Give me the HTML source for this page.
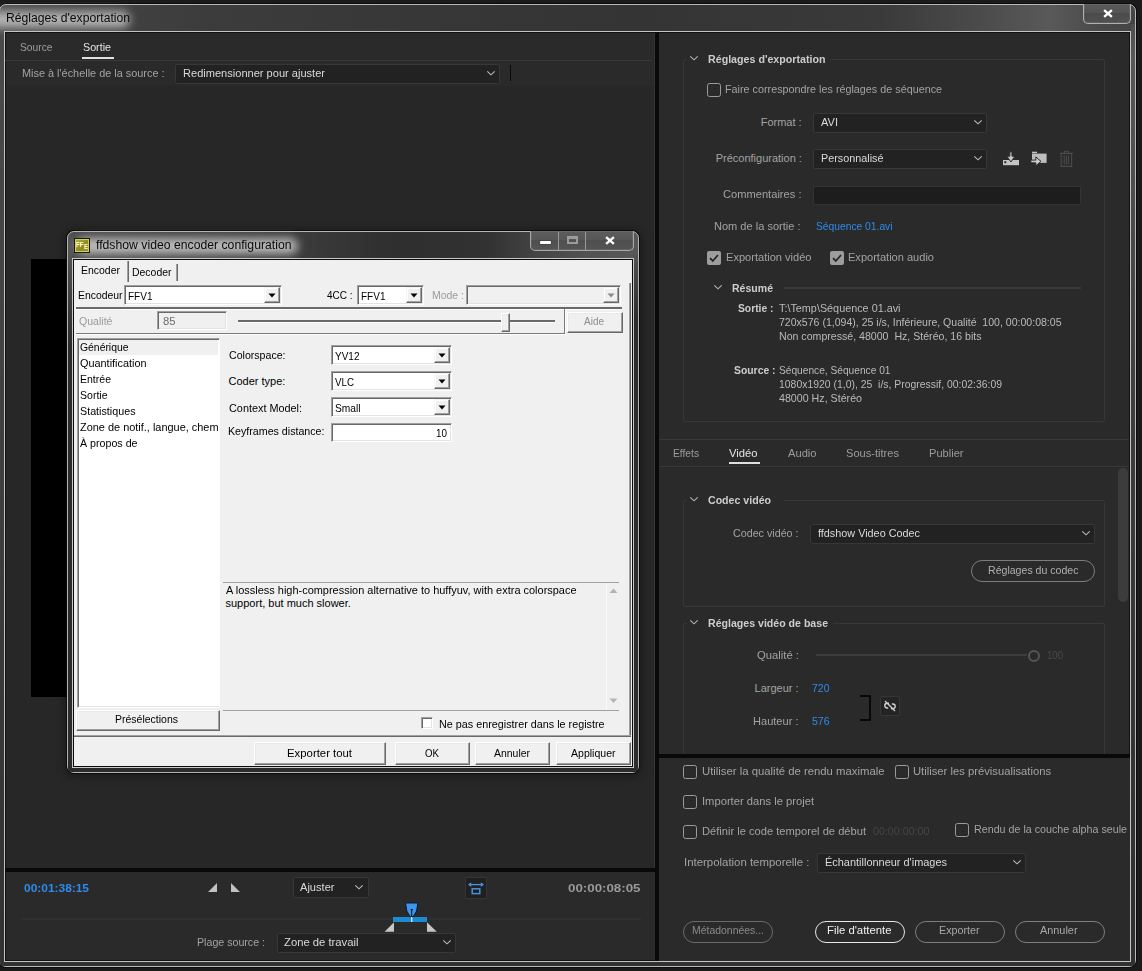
<!DOCTYPE html>
<html lang="fr"><head><meta charset="utf-8"><title>Réglages d'exportation</title>
<style>
html,body{margin:0;padding:0;background:#1b1b1b;}
body{width:1142px;height:971px;overflow:hidden;font-family:"Liberation Sans",sans-serif;}
#root{position:relative;width:1142px;height:971px;overflow:hidden;}
#root div,#root span.t,#root svg{position:absolute;box-sizing:border-box;}
span.t{line-height:0;white-space:pre;transform-origin:0 0;}
.dd{background:#222222;border:1px solid #373737;border-radius:2px;}
.cb{border:1.7px solid #9b9b9b;border-radius:2.5px;}
.pill{border:1px solid #7d7d7d;border-radius:11px;}
.sunk{border:1px solid;border-color:#a0a0a0 #fff #fff #a0a0a0;box-shadow:inset 1px 1px 0 #696969,inset -1px -1px 0 #e3e3e3;background:#fff;}
.rais{border:1px solid;border-color:#fff #696969 #696969 #fff;box-shadow:inset -1px -1px 0 #a0a0a0,inset 1px 1px 0 #e9e9e9;background:#f0f0f0;}
.cbtn{border:1px solid;border-color:#f4f4f4 #696969 #696969 #f4f4f4;box-shadow:inset -1px -1px 0 #a0a0a0,inset 1px 1px 0 #fff;background:#f0f0f0;}

</style></head>
<body>
<div id="root">
<div style="left:-1px;top:4px;width:1137px;height:963px;border:1px solid #b9b9b9;border-radius:7px;box-shadow:0 0 0 1px #0c0c0c;background:linear-gradient(90deg,#4a4a4a 0,#3c3c3c 200px,#363636 480px,#343434 640px,#3a3a3a 880px,#4b4b4b 980px,#595959 1050px,#4a4a4a 1100px,#444 1137px);"></div>
<div style="left:0px;top:28px;width:4px;height:934px;background:linear-gradient(#4a4a4a 0,#454545 200px,#3a3a3a 600px,#333 900px);"></div>
<div style="left:1131px;top:24px;width:4px;height:938px;background:linear-gradient(#4e4e4e 0,#585858 30px,#4a4a4a 200px,#3c3c3c 420px,#303030 900px);"></div>
<div style="left:0px;top:962px;width:1135px;height:4px;background:#313131;border-radius:0 0 6px 6px;"></div>
<div style="left:-12px;top:11px;width:142px;height:17px;background:rgba(205,205,205,.80);border-radius:9px;filter:blur(5px);"></div>
<span class="t" style="left:6.00px;top:17.50px;font-size:12px;color:#0a0a0a;transform:scaleX(1.0134);">Réglages d'exportation</span>
<div style="left:1083px;top:4px;width:48px;height:20px;border:1px solid #b0b0b0;border-top:none;border-radius:0 0 5px 5px;background:linear-gradient(#5a5a5a,#545454 45%,#4b4b4b 50%,#515151);box-shadow:inset 0 0 0 1px rgba(255,255,255,.08);"></div>
<svg style="left:1102.5px;top:8.5px" width="10" height="9" viewBox="0 0 11 10"><path d="M1.2 1.2 L9.8 8.8 M9.8 1.2 L1.2 8.8" stroke="#fff" stroke-width="2.6" fill="none"/></svg>
<div style="left:4px;top:31px;width:1127px;height:931px;border:1px solid #c4c4c4;background:#111;"></div>
<div style="left:6px;top:33px;width:1123px;height:927px;background:#2a2a2a;"></div>
<span class="t" style="left:19.50px;top:47.00px;font-size:11px;color:#9c9c9c;transform:scaleX(0.9325);">Source</span>
<span class="t" style="left:83.00px;top:47.00px;font-size:11px;color:#e4e4e4;transform:scaleX(0.9745);">Sortie</span>
<div style="left:82px;top:57px;width:32px;height:2px;background:#e0e0e0;"></div>
<div style="left:5px;top:60px;width:647px;height:1px;background:#373737;"></div>
<div style="left:654px;top:33px;width:1px;height:835px;background:#353535;"></div>
<span class="t" style="left:21.80px;top:73.00px;font-size:11px;color:#a3a3a3;transform:scaleX(0.9900);">Mise à l'échelle de la source :</span>
<div class="dd" style="left:175px;top:64px;width:325px;height:20px;"></div>
<span class="t" style="left:183.00px;top:73.00px;font-size:11px;color:#dadada;transform:scaleX(1.0054);">Redimensionner pour ajuster</span>
<svg style="left:486px;top:70px" width="10" height="7" viewBox="0 0 10 7"><path d="M1.3 1.3 L5 4.8 L8.7 1.3" stroke="#b9b9b9" stroke-width="1.15" fill="none"/></svg>
<div style="left:510px;top:65px;width:1px;height:16px;background:#0a0a0a;"></div>
<div style="left:6px;top:86px;width:648px;height:782px;background:#272727;"></div>
<div style="left:31px;top:259px;width:600px;height:438px;background:#000;"></div>
<div style="left:655px;top:32px;width:4px;height:929px;background:#090909;"></div>
<div style="left:5px;top:868px;width:650px;height:4px;background:#090909;"></div>
<span class="t" style="left:23.50px;top:888.00px;font-size:11px;color:#2d8ceb;font-weight:bold;transform:scaleX(1.0847);">00:01:38:15</span>
<svg style="left:207px;top:882px" width="34" height="11" viewBox="0 0 34 11"><path d="M1 10 L10 10 L10 1 Z M24 1 L24 10 L33 10 Z" fill="#c2c2c2"/></svg>
<div class="dd" style="left:293px;top:877px;width:76px;height:21px;"></div>
<span class="t" style="left:300.00px;top:887.00px;font-size:11px;color:#dadada;transform:scaleX(1.0078);">Ajuster</span>
<svg style="left:354px;top:884px" width="10" height="7" viewBox="0 0 10 7"><path d="M1.3 1.3 L5 4.8 L8.7 1.3" stroke="#b9b9b9" stroke-width="1.15" fill="none"/></svg>
<div style="left:465px;top:877px;width:22px;height:22px;background:#202020;border:1px solid #343434;border-radius:2px;"></div>
<svg style="left:467px;top:880px" width="18" height="16" viewBox="0 0 18 16"><path d="M2 4.6 H16" stroke="#4a8fe0" stroke-width="1.3" fill="none"/><path d="M1 4.6 L4.2 2.2 V7 Z M17 4.6 L13.8 2.2 V7 Z" fill="#4a8fe0"/><rect x="5.2" y="8.8" width="7.6" height="4.8" stroke="#4a8fe0" stroke-width="1.5" fill="none"/></svg>
<span class="t" style="left:568.00px;top:888.00px;font-size:11px;color:#9a9a9a;font-weight:bold;transform:scaleX(1.2099);">00:00:08:05</span>
<div style="left:21px;top:918px;width:620px;height:2px;background:#303030;"></div>
<div style="left:393px;top:917px;width:34px;height:5px;background:#1c8bd0;"></div>
<svg style="left:404px;top:902px" width="16" height="21" viewBox="0 0 16 21"><path d="M2.2 1 H13.2 Q13.8 1 13.7 2 L12.6 9 L9.2 14.8 H6.2 L2.8 9 L1.7 2 Q1.6 1 2.2 1 Z" fill="#3c96f0" stroke="#0b1a30" stroke-width="1"/><path d="M6.6 7.6 H8.8 M7.7 7.6 V15" stroke="#0a0a0a" stroke-width="1"/><path d="M7.7 15 V20" stroke="#f4f4f4" stroke-width="1.2"/></svg>
<svg style="left:384px;top:922px" width="54" height="10" viewBox="0 0 54 10"><path d="M0.5 9.8 H10 V0.3 Z M43 0.3 V9.8 H52.8 Z" fill="#c6c6c6"/></svg>
<span class="t" style="left:196.50px;top:942.00px;font-size:11px;color:#a3a3a3;transform:scaleX(0.9671);">Plage source :</span>
<div class="dd" style="left:277px;top:933px;width:179px;height:20px;"></div>
<span class="t" style="left:284.00px;top:942.00px;font-size:11px;color:#dadada;transform:scaleX(1.0240);">Zone de travail</span>
<svg style="left:442px;top:939px" width="10" height="7" viewBox="0 0 10 7"><path d="M1.3 1.3 L5 4.8 L8.7 1.3" stroke="#b9b9b9" stroke-width="1.15" fill="none"/></svg>
<div style="left:683px;top:59px;width:422px;height:363px;border:1px solid #373737;border-radius:2px;"></div>
<div style="left:687px;top:53px;width:144px;height:13px;background:#2a2a2a;"></div>
<svg style="left:689px;top:55px" width="10" height="7" viewBox="0 0 10 7"><path d="M1.3 1.3 L5 4.8 L8.7 1.3" stroke="#b4b4b4" stroke-width="1.15" fill="none"/></svg>
<span class="t" style="left:708.00px;top:58.80px;font-size:11px;color:#cdcdcd;font-weight:bold;transform:scaleX(0.9696);">Réglages d'exportation</span>
<div class="cb" style="left:707.2px;top:83.3px;width:13.6px;height:13.6px;"></div>
<span class="t" style="left:725.00px;top:89.00px;font-size:11px;color:#a3a3a3;transform:scaleX(0.9804);">Faire correspondre les réglages de séquence</span>
<span class="t" style="left:760.70px;top:121.70px;font-size:11px;color:#a3a3a3;">Format :</span>
<div class="dd" style="left:813px;top:113px;width:174px;height:20px;"></div>
<span class="t" style="left:821.00px;top:121.70px;font-size:11px;color:#dadada;transform:scaleX(1.0051);">AVI</span>
<svg style="left:973px;top:119px" width="10" height="7" viewBox="0 0 10 7"><path d="M1.3 1.3 L5 4.8 L8.7 1.3" stroke="#b9b9b9" stroke-width="1.15" fill="none"/></svg>
<span class="t" style="left:715.70px;top:158.00px;font-size:11px;color:#a3a3a3;">Préconfiguration :</span>
<div class="dd" style="left:813px;top:149px;width:174px;height:20px;"></div>
<span class="t" style="left:821.00px;top:158.00px;font-size:11px;color:#dadada;transform:scaleX(0.9829);">Personnalisé</span>
<svg style="left:973px;top:155px" width="10" height="7" viewBox="0 0 10 7"><path d="M1.3 1.3 L5 4.8 L8.7 1.3" stroke="#b9b9b9" stroke-width="1.15" fill="none"/></svg>
<svg style="left:1002px;top:151px" width="18" height="15" viewBox="0 0 18 15"><rect x="1" y="9" width="16" height="5.2" fill="#c4c4c4"/><rect x="2.3" y="10.2" width="2" height="2" fill="#2a2a2a"/><path d="M7.8 0.8 H10 V5.2 H13 L8.9 11 L4.8 5.2 H7.8 Z" fill="#c4c4c4" stroke="#2a2a2a" stroke-width="1"/></svg>
<svg style="left:1030px;top:151px" width="18" height="15" viewBox="0 0 18 15"><rect x="2" y="0.7" width="5" height="1.5" fill="#c4c4c4"/><rect x="2" y="2.6" width="14.6" height="9.3" fill="#bdbdbd"/><path d="M0.8 9.1 H5.8 V5.9 L11 10.4 L5.8 14.8 V11.8 H0.8 Z" fill="#cacaca" stroke="#2a2a2a" stroke-width="1"/></svg>
<svg style="left:1059px;top:150px" width="15" height="18" viewBox="0 0 15 18"><path d="M5.4 3.2 V1.6 Q5.4 1.2 5.9 1.2 H8.9 Q9.4 1.2 9.4 1.6 V3.2 M1 3.4 H13.8 M2.2 3.6 V16.4 H12.6 V3.6 M5.2 5.6 V14.6 M7.4 5.6 V14.6 M9.6 5.6 V14.6" stroke="#4b4b4b" stroke-width="1.1" fill="none"/></svg>
<span class="t" style="left:723.20px;top:194.00px;font-size:11px;color:#a3a3a3;transform:scaleX(1.0112);">Commentaires :</span>
<div style="left:813px;top:186px;width:268px;height:19px;background:#1d1d1d;border:1px solid #343434;border-radius:2px;"></div>
<span class="t" style="left:713.50px;top:226.00px;font-size:11px;color:#a3a3a3;transform:scaleX(1.0035);">Nom de la sortie :</span>
<span class="t" style="left:816.00px;top:226.00px;font-size:11px;color:#2d8ceb;transform:scaleX(0.9335);">Séquence 01.avi</span>
<div style="left:707px;top:251px;width:14px;height:14px;background:#9d9d9d;border-radius:2px;"></div>
<svg style="left:707px;top:251px" width="14" height="14" viewBox="0 0 14 14"><path d="M3 7.2 L5.8 10 L11 4" stroke="#262626" stroke-width="1.8" fill="none"/></svg>
<span class="t" style="left:725.50px;top:256.60px;font-size:11px;color:#a3a3a3;transform:scaleX(1.0060);">Exportation vidéo</span>
<div style="left:830px;top:251px;width:14px;height:14px;background:#9d9d9d;border-radius:2px;"></div>
<svg style="left:830px;top:251px" width="14" height="14" viewBox="0 0 14 14"><path d="M3 7.2 L5.8 10 L11 4" stroke="#262626" stroke-width="1.8" fill="none"/></svg>
<span class="t" style="left:848.00px;top:256.60px;font-size:11px;color:#a3a3a3;transform:scaleX(1.0046);">Exportation audio</span>
<svg style="left:713px;top:284px" width="10" height="7" viewBox="0 0 10 7"><path d="M1.3 1.3 L5 4.8 L8.7 1.3" stroke="#b4b4b4" stroke-width="1.15" fill="none"/></svg>
<span class="t" style="left:732.00px;top:288.00px;font-size:11px;color:#cdcdcd;font-weight:bold;transform:scaleX(0.9581);">Résumé</span>
<div style="left:784px;top:287px;width:297px;height:2px;background:#383838;"></div>
<span class="t" style="left:738.00px;top:308.00px;font-size:11px;color:#cdcdcd;font-weight:bold;transform:scaleX(0.9369);">Sortie :</span>
<span class="t" style="left:779.00px;top:308.00px;font-size:11px;color:#bababa;transform:scaleX(0.9837);">T:\Temp\Séquence 01.avi</span>
<span class="t" style="left:779.00px;top:321.50px;font-size:11px;color:#bababa;transform:scaleX(0.9585);">720x576 (1,094), 25 i/s, Inférieure, Qualité  100, 00:00:08:05</span>
<span class="t" style="left:779.00px;top:335.50px;font-size:11px;color:#bababa;transform:scaleX(0.9628);">Non compressé, 48000  Hz, Stéréo, 16 bits</span>
<span class="t" style="left:734.00px;top:370.00px;font-size:11px;color:#cdcdcd;font-weight:bold;transform:scaleX(0.9430);">Source :</span>
<span class="t" style="left:779.00px;top:370.00px;font-size:11px;color:#bababa;transform:scaleX(0.9255);">Séquence, Séquence 01</span>
<span class="t" style="left:779.00px;top:383.50px;font-size:11px;color:#bababa;transform:scaleX(0.9473);">1080x1920 (1,0), 25  i/s, Progressif, 00:02:36:09</span>
<span class="t" style="left:779.00px;top:397.50px;font-size:11px;color:#bababa;transform:scaleX(0.9696);">48000 Hz, Stéréo</span>
<div style="left:659px;top:439px;width:470px;height:1px;background:#373737;"></div>
<div style="left:659px;top:466px;width:470px;height:1px;background:#373737;"></div>
<span class="t" style="left:673.00px;top:453.00px;font-size:11px;color:#9c9c9c;transform:scaleX(0.9311);">Effets</span>
<span class="t" style="left:729.00px;top:453.00px;font-size:11px;color:#e4e4e4;transform:scaleX(1.0203);">Vidéo</span>
<div style="left:729px;top:462px;width:31px;height:2px;background:#e0e0e0;"></div>
<span class="t" style="left:788.00px;top:453.00px;font-size:11px;color:#9c9c9c;transform:scaleX(1.0131);">Audio</span>
<span class="t" style="left:845.50px;top:453.00px;font-size:11px;color:#9c9c9c;transform:scaleX(1.0082);">Sous-titres</span>
<span class="t" style="left:928.50px;top:453.00px;font-size:11px;color:#9c9c9c;transform:scaleX(1.0076);">Publier</span>
<div style="left:1118px;top:468px;width:10px;height:134px;background:#3c3c3c;border-radius:5px;"></div>
<div style="left:683px;top:500px;width:422px;height:107px;border:1px solid #373737;border-radius:2px;"></div>
<div style="left:687px;top:494px;width:97px;height:13px;background:#2a2a2a;"></div>
<svg style="left:689px;top:496px" width="10" height="7" viewBox="0 0 10 7"><path d="M1.3 1.3 L5 4.8 L8.7 1.3" stroke="#b4b4b4" stroke-width="1.15" fill="none"/></svg>
<span class="t" style="left:708.00px;top:499.80px;font-size:11px;color:#cdcdcd;font-weight:bold;transform:scaleX(0.9633);">Codec vidéo</span>
<span class="t" style="left:733.10px;top:533.00px;font-size:11px;color:#a3a3a3;transform:scaleX(0.9739);">Codec vidéo :</span>
<div class="dd" style="left:810px;top:524px;width:285px;height:20px;"></div>
<span class="t" style="left:818.00px;top:533.00px;font-size:11px;color:#dadada;transform:scaleX(0.9851);">ffdshow Video Codec</span>
<svg style="left:1081px;top:530px" width="10" height="7" viewBox="0 0 10 7"><path d="M1.3 1.3 L5 4.8 L8.7 1.3" stroke="#b9b9b9" stroke-width="1.15" fill="none"/></svg>
<div class="pill" style="left:971px;top:560px;width:124px;height:22px;"></div>
<span class="t" style="left:987.50px;top:570.00px;font-size:11px;color:#b0b0b0;transform:scaleX(0.9610);">Réglages du codec</span>
<div style="left:683px;top:623px;width:422px;height:131px;border:1px solid #373737;border-bottom:none;border-radius:2px 2px 0 0;"></div>
<div style="left:687px;top:617px;width:146px;height:13px;background:#2a2a2a;"></div>
<svg style="left:689px;top:619px" width="10" height="7" viewBox="0 0 10 7"><path d="M1.3 1.3 L5 4.8 L8.7 1.3" stroke="#b4b4b4" stroke-width="1.15" fill="none"/></svg>
<span class="t" style="left:708.00px;top:623.30px;font-size:11px;color:#cdcdcd;font-weight:bold;transform:scaleX(0.9623);">Réglages vidéo de base</span>
<span class="t" style="left:756.60px;top:655.00px;font-size:11px;color:#a3a3a3;transform:scaleX(1.0253);">Qualité :</span>
<div style="left:816px;top:654px;width:211px;height:2px;background:#3d3d3d;"></div>
<div style="left:1028px;top:650px;width:12px;height:12px;border:2px solid #555;border-radius:6px;"></div>
<span class="t" style="left:1046.50px;top:655.00px;font-size:11px;color:#4a4a4a;transform:scaleX(0.8719);">100</span>
<span class="t" style="left:754.60px;top:687.80px;font-size:11px;color:#a3a3a3;">Largeur :</span>
<span class="t" style="left:812.00px;top:687.80px;font-size:11px;color:#2d8ceb;transform:scaleX(0.9536);">720</span>
<span class="t" style="left:753.10px;top:721.00px;font-size:11px;color:#a3a3a3;transform:scaleX(1.0057);">Hauteur :</span>
<span class="t" style="left:812.00px;top:721.00px;font-size:11px;color:#2d8ceb;transform:scaleX(0.9536);">576</span>
<div style="left:860px;top:695px;width:11px;height:26px;border:2px solid #080808;border-left:none;"></div>
<div style="left:880px;top:696px;width:20px;height:20px;background:#242424;border:1px solid #363636;border-radius:2px;"></div>
<svg style="left:883px;top:699px" width="14" height="14" viewBox="0 0 14 14"><path d="M6 4.2 L4.2 4.2 A2.4 2.4 0 0 0 4.2 9 L5.2 9 M8 9.8 L9.8 9.8 A2.4 2.4 0 0 0 9.8 5 L8.8 5 M2 2 L12 12" stroke="#d0d0d0" stroke-width="1.4" fill="none" transform="rotate(0 7 7)"/></svg>
<div style="left:659px;top:754px;width:471px;height:4px;background:#090909;"></div>
<div style="left:659px;top:758px;width:471px;height:203px;background:#2a2a2a;"></div>
<div class="cb" style="left:683.2px;top:765.3px;width:13.6px;height:13.6px;"></div>
<span class="t" style="left:701.50px;top:770.50px;font-size:11px;color:#a3a3a3;transform:scaleX(1.0294);">Utiliser la qualité de rendu maximale</span>
<div class="cb" style="left:895.2px;top:765.3px;width:13.6px;height:13.6px;"></div>
<span class="t" style="left:912.50px;top:770.50px;font-size:11px;color:#a3a3a3;transform:scaleX(1.0215);">Utiliser les prévisualisations</span>
<div class="cb" style="left:683.2px;top:795.3px;width:13.6px;height:13.6px;"></div>
<span class="t" style="left:701.50px;top:800.50px;font-size:11px;color:#a3a3a3;transform:scaleX(1.0178);">Importer dans le projet</span>
<div class="cb" style="left:683.2px;top:825.3px;width:13.6px;height:13.6px;"></div>
<span class="t" style="left:701.50px;top:830.50px;font-size:11px;color:#a3a3a3;transform:scaleX(1.0122);">Définir le code temporel de début</span>
<span class="t" style="left:872.50px;top:830.50px;font-size:11px;color:#454545;transform:scaleX(0.9724);">00:00:00:00</span>
<div class="cb" style="left:955.2px;top:823.3px;width:13.6px;height:13.6px;"></div>
<span class="t" style="left:973.50px;top:828.50px;font-size:11px;color:#a3a3a3;transform:scaleX(0.9735);">Rendu de la couche alpha seule</span>
<span class="t" style="left:684.00px;top:862.00px;font-size:11px;color:#a3a3a3;transform:scaleX(1.0367);">Interpolation temporelle :</span>
<div class="dd" style="left:817px;top:853px;width:209px;height:20px;"></div>
<span class="t" style="left:824.50px;top:862.00px;font-size:11px;color:#dadada;transform:scaleX(0.9955);">Échantillonneur d'images</span>
<svg style="left:1012px;top:859px" width="10" height="7" viewBox="0 0 10 7"><path d="M1.3 1.3 L5 4.8 L8.7 1.3" stroke="#b9b9b9" stroke-width="1.15" fill="none"/></svg>
<div style="left:683px;top:921px;width:90px;height:22px;border:1px solid #6a6a6a;border-radius:11px;"></div>
<span class="t" style="left:691.50px;top:930.20px;font-size:11px;color:#8a8a8a;transform:scaleX(0.9496);">Métadonnées...</span>
<div style="left:815px;top:921px;width:90px;height:22px;border:1px solid #e6e6e6;border-radius:11px;"></div>
<span class="t" style="left:827.00px;top:930.20px;font-size:11px;color:#f0f0f0;transform:scaleX(1.0298);">File d'attente</span>
<div class="pill" style="left:915px;top:921px;width:90px;height:22px;"></div>
<span class="t" style="left:939.00px;top:930.20px;font-size:11px;color:#a8a8a8;transform:scaleX(0.9743);">Exporter</span>
<div class="pill" style="left:1015px;top:921px;width:90px;height:22px;"></div>
<span class="t" style="left:1040.00px;top:930.20px;font-size:11px;color:#a8a8a8;transform:scaleX(0.9891);">Annuler</span>
<div style="left:67px;top:231px;width:572px;height:542px;border:1px solid #b4b4b4;border-radius:7px;box-shadow:0 0 0 1px #0b0b0b,0 1px 9px 2px rgba(0,0,0,.38);background:linear-gradient(90deg,#565656 0,#4a4a4a 6px,#3a3a3a 240px,#2e2e2e 330px,#323232 420px,#444 470px,#525252 520px,#585858 572px);"></div>
<div style="left:68px;top:256px;width:4px;height:512px;background:linear-gradient(#545454 0,#4a4a4a 20px,#2c2c2c 90px);"></div>
<div style="left:634px;top:252px;width:4px;height:516px;background:linear-gradient(#585858 0,#4c4c4c 12px,#2c2c2c 70px);"></div>
<div style="left:68px;top:768px;width:570px;height:4px;background:#2b2b2b;border-radius:0 0 6px 6px;"></div>
<div style="left:76px;top:238px;width:222px;height:16px;background:rgba(215,215,215,.82);border-radius:8px;filter:blur(5px);"></div>
<div style="left:74px;top:238px;width:16px;height:15px;background:linear-gradient(135deg,#b6b23a,#8e8a1c 60%,#a29e2c);border:1px solid #1a1a00;box-shadow:inset 0 0 0 1px #d2ce62;"></div>
<span class="t" style="left:76.30px;top:244.60px;font-size:7px;color:#fffbe0;font-weight:bold;transform:scaleX(0.8888);">FF</span>
<span class="t" style="left:84.00px;top:247.00px;font-size:7px;color:#fffbe0;font-weight:bold;transform:scaleX(0.8567);">E</span>
<span class="t" style="left:95.50px;top:244.50px;font-size:12px;color:#0a0a0a;transform:scaleX(1.0188);">ffdshow video encoder configuration</span>
<div style="left:530px;top:231px;width:104px;height:20px;border:1px solid #a6a6a6;border-top:none;border-radius:0 0 5px 5px;background:linear-gradient(#5d5d5d,#575757 45%,#4f4f4f 50%,#545454);box-shadow:inset 0 0 0 1px rgba(255,255,255,.08);"></div>
<div style="left:558px;top:232px;width:1px;height:18px;background:#9a9a9a;"></div>
<div style="left:585px;top:232px;width:1px;height:18px;background:#9a9a9a;"></div>
<div style="left:540px;top:241px;width:11px;height:3px;background:#fff;border-radius:1px;box-shadow:0 0 0 1px rgba(60,60,60,.55);"></div>
<div style="left:567px;top:236px;width:11px;height:8px;border:2px solid #9b9b9b;border-top-width:3px;"></div>
<svg style="left:604.5px;top:235.5px" width="10" height="9" viewBox="0 0 11 10"><path d="M1.2 1.2 L9.8 8.8 M9.8 1.2 L1.2 8.8" stroke="#fff" stroke-width="2.6" fill="none"/></svg>
<div style="left:72px;top:258px;width:562px;height:510px;border:1px solid #c9c9c9;background:#0a0a0a;"></div>
<div style="left:74px;top:260px;width:558px;height:506px;background:#f0f0f0;"></div>
<div style="left:75px;top:261px;width:54px;height:21px;border-right:1px solid #696969;box-shadow:inset -1px 0 0 #a0a0a0;"></div>
<span class="t" style="left:81.00px;top:269.70px;font-size:11px;color:#000;transform:scaleX(0.9520);">Encoder</span>
<div style="left:129px;top:264px;width:49px;height:17px;border-right:1px solid #696969;box-shadow:inset -1px 0 0 #a0a0a0;"></div>
<span class="t" style="left:131.60px;top:272.00px;font-size:11px;color:#000;transform:scaleX(0.9501);">Decoder</span>
<div style="left:629px;top:283px;width:2px;height:454px;background:#696969;border-left:1px solid #a0a0a0;"></div>
<div style="left:74px;top:735px;width:557px;height:2px;background:#696969;border-top:1px solid #a0a0a0;"></div>
<span class="t" style="left:77.80px;top:295.00px;font-size:11px;color:#000;transform:scaleX(0.9451);">Encodeur</span>
<div class="sunk" style="left:124px;top:285px;width:158px;height:20px;"></div>
<div class="cbtn" style="left:264px;top:287px;width:16px;height:16px;"></div>
<svg style="left:268px;top:293px" width="8" height="5" viewBox="0 0 8 5"><path d="M0.5 0.5 H7.5 L4 4.5 Z" fill="#000"/></svg>
<span class="t" style="left:128.00px;top:295.70px;font-size:11px;color:#000;transform:scaleX(0.9111);">FFV1</span>
<span class="t" style="left:327.00px;top:295.00px;font-size:11px;color:#000;transform:scaleX(0.9069);">4CC :</span>
<div class="sunk" style="left:357px;top:285px;width:67px;height:20px;"></div>
<div class="cbtn" style="left:406px;top:287px;width:16px;height:16px;"></div>
<svg style="left:410px;top:293px" width="8" height="5" viewBox="0 0 8 5"><path d="M0.5 0.5 H7.5 L4 4.5 Z" fill="#000"/></svg>
<span class="t" style="left:361.00px;top:295.70px;font-size:11px;color:#000;transform:scaleX(0.9111);">FFV1</span>
<span class="t" style="left:431.50px;top:295.00px;font-size:11px;color:#9a9a9a;transform:scaleX(0.9517);">Mode :</span>
<div class="sunk" style="left:466px;top:285px;width:155px;height:20px;background:#f0f0f0;"></div>
<div class="cbtn" style="left:603px;top:287px;width:16px;height:16px;"></div>
<svg style="left:607px;top:293px" width="8" height="5" viewBox="0 0 8 5"><path d="M0.5 0.5 H7.5 L4 4.5 Z" fill="#8a8a8a"/></svg>
<div style="left:76px;top:307px;width:546px;height:3px;background:#fff;border-top:2px solid #6a6a6a;"></div>
<span class="t" style="left:78.50px;top:321.00px;font-size:11px;color:#9a9a9a;transform:scaleX(0.9612);">Qualité</span>
<div class="sunk" style="left:157px;top:311px;width:70px;height:19px;background:#f0f0f0;"></div>
<span class="t" style="left:162.50px;top:321.00px;font-size:11px;color:#6d6d6d;transform:scaleX(1.0217);">85</span>
<div style="left:238px;top:320px;width:317px;height:3px;background:#fff;border-top:2px solid #6a6a6a;"></div>
<div class="rais" style="left:501px;top:313px;width:9px;height:19px;"></div>
<div style="left:564px;top:309px;width:2px;height:25px;background:#fff;border-left:1px solid #7a7a7a;"></div>
<div style="left:76px;top:333px;width:489px;height:2px;background:#fff;border-top:1px solid #7a7a7a;"></div>
<div class="rais" style="left:567px;top:312px;width:56px;height:21px;"></div>
<span class="t" style="left:584.00px;top:320.70px;font-size:11px;color:#8e8e8e;transform:scaleX(0.9085);">Aide</span>
<div class="sunk" style="left:77px;top:338px;width:143px;height:370px;"></div>
<div style="left:79px;top:340px;width:139px;height:15px;background:#f0f0f0;"></div>
<span class="t" style="left:79.50px;top:347.00px;font-size:11px;color:#000;transform:scaleX(0.9442);">Générique</span>
<span class="t" style="left:79.50px;top:363.00px;font-size:11px;color:#000;transform:scaleX(0.9887);">Quantification</span>
<span class="t" style="left:79.50px;top:379.00px;font-size:11px;color:#000;transform:scaleX(0.9566);">Entrée</span>
<span class="t" style="left:79.50px;top:395.00px;font-size:11px;color:#000;transform:scaleX(0.9571);">Sortie</span>
<span class="t" style="left:79.50px;top:411.00px;font-size:11px;color:#000;transform:scaleX(0.9761);">Statistiques</span>
<span class="t" style="left:79.50px;top:427.00px;font-size:11px;color:#000;transform:scaleX(0.9935);">Zone de notif., langue, chem</span>
<span class="t" style="left:79.50px;top:443.00px;font-size:11px;color:#000;transform:scaleX(0.9694);">À propos de</span>
<div style="left:218px;top:340px;width:1px;height:366px;background:#fff;"></div>
<span class="t" style="left:228.50px;top:355.00px;font-size:11px;color:#000;transform:scaleX(0.9627);">Colorspace:</span>
<div class="sunk" style="left:331px;top:345px;width:121px;height:20px;"></div>
<div class="cbtn" style="left:434px;top:347px;width:16px;height:16px;"></div>
<svg style="left:438px;top:353px" width="8" height="5" viewBox="0 0 8 5"><path d="M0.5 0.5 H7.5 L4 4.5 Z" fill="#000"/></svg>
<span class="t" style="left:335.00px;top:355.70px;font-size:11px;color:#000;transform:scaleX(0.9105);">YV12</span>
<span class="t" style="left:228.50px;top:380.50px;font-size:11px;color:#000;">Coder type:</span>
<div class="sunk" style="left:331px;top:371px;width:121px;height:20px;"></div>
<div class="cbtn" style="left:434px;top:373px;width:16px;height:16px;"></div>
<svg style="left:438px;top:379px" width="8" height="5" viewBox="0 0 8 5"><path d="M0.5 0.5 H7.5 L4 4.5 Z" fill="#000"/></svg>
<span class="t" style="left:335.00px;top:381.70px;font-size:11px;color:#000;transform:scaleX(0.8879);">VLC</span>
<span class="t" style="left:228.50px;top:407.50px;font-size:11px;color:#000;transform:scaleX(0.9868);">Context Model:</span>
<div class="sunk" style="left:331px;top:397px;width:121px;height:20px;"></div>
<div class="cbtn" style="left:434px;top:399px;width:16px;height:16px;"></div>
<svg style="left:438px;top:405px" width="8" height="5" viewBox="0 0 8 5"><path d="M0.5 0.5 H7.5 L4 4.5 Z" fill="#000"/></svg>
<span class="t" style="left:335.00px;top:407.70px;font-size:11px;color:#000;transform:scaleX(0.9271);">Small</span>
<span class="t" style="left:227.50px;top:431.00px;font-size:11px;color:#000;transform:scaleX(0.9684);">Keyframes distance:</span>
<div class="sunk" style="left:331px;top:423px;width:121px;height:19px;"></div>
<span class="t" style="left:435.50px;top:433.00px;font-size:11px;color:#000;transform:scaleX(0.8991);">10</span>
<div style="left:223px;top:582px;width:396px;height:129px;border-top:1px solid #a0a0a0;border-bottom:1px solid #a0a0a0;"></div>
<span class="t" style="left:225.50px;top:589.50px;font-size:11px;color:#000;transform:scaleX(0.9965);">A lossless high-compression alternative to huffyuv, with extra colorspace</span>
<span class="t" style="left:225.50px;top:602.50px;font-size:11px;color:#000;">support, but much slower.</span>
<div style="left:606px;top:583px;width:1px;height:127px;background:#fafafa;"></div>
<svg style="left:609px;top:588px" width="9" height="6" viewBox="0 0 9 6"><path d="M4.5 0.5 L8.5 5 H0.5 Z" fill="#b4b4b4"/></svg>
<svg style="left:609px;top:698px" width="9" height="6" viewBox="0 0 9 6"><path d="M0.5 0.5 H8.5 L4.5 5 Z" fill="#b4b4b4"/></svg>
<div class="rais" style="left:76px;top:710px;width:144px;height:21px;"></div>
<span class="t" style="left:115.00px;top:718.70px;font-size:11px;color:#000;transform:scaleX(0.9541);">Présélections</span>
<div class="sunk" style="left:421px;top:717px;width:12px;height:12px;"></div>
<span class="t" style="left:438.50px;top:723.50px;font-size:11px;color:#000;transform:scaleX(0.9808);">Ne pas enregistrer dans le registre</span>
<div class="rais" style="left:254px;top:742px;width:132px;height:23px;"></div>
<span class="t" style="left:286.50px;top:752.70px;font-size:11px;color:#000;transform:scaleX(1.0322);">Exporter tout</span>
<div class="rais" style="left:395px;top:742px;width:75px;height:23px;"></div>
<span class="t" style="left:424.50px;top:752.70px;font-size:11px;color:#000;transform:scaleX(0.8809);">OK</span>
<div class="rais" style="left:475px;top:742px;width:75px;height:23px;"></div>
<span class="t" style="left:493.50px;top:752.70px;font-size:11px;color:#000;transform:scaleX(0.9496);">Annuler</span>
<div class="rais" style="left:556px;top:742px;width:75px;height:23px;"></div>
<span class="t" style="left:570.50px;top:752.70px;font-size:11px;color:#000;transform:scaleX(0.9575);">Appliquer</span>
</div>
</body></html>
